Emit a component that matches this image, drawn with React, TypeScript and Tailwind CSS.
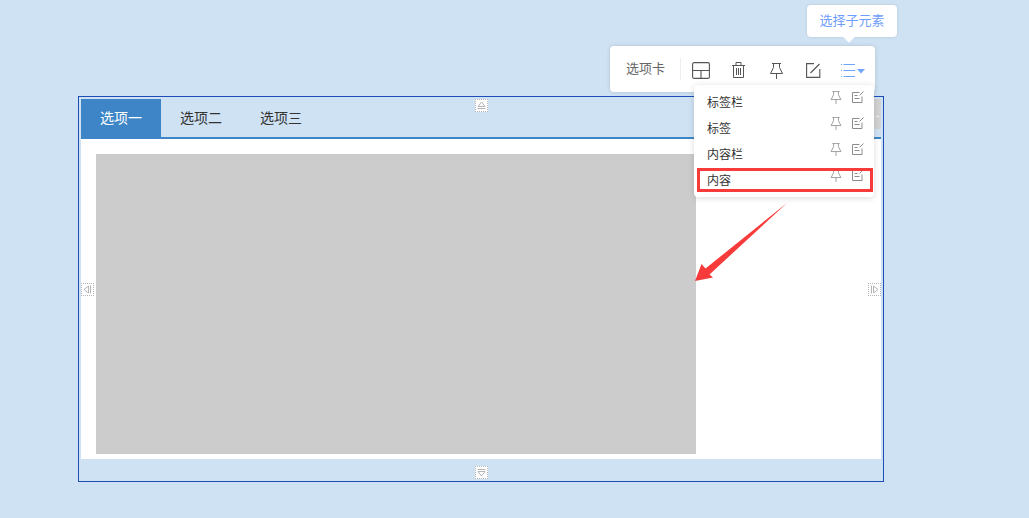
import React from 'react';

const font = { fontFamily: '"Liberation Sans", "Noto Sans CJK SC", sans-serif' };

const PinIcon = ({ className = '' }: { className?: string }) => (
    <svg viewBox="0 0 13 16" className={className} fill="none" stroke="currentColor" strokeWidth="1">
        <path d="M2 .5h9M3.5 .5v4L.5 10.5h12L9.5 4.5v-4M6.5 10.5v5.5" />
    </svg>
);

const EditIcon = ({ className = '' }: { className?: string }) => (
    <svg viewBox="0 0 12 12" className={className} fill="none" stroke="currentColor" strokeWidth="1">
        <path d="M7.5 1.5H.5v10h9.5V5.5M2.5 4.5h3M2.5 7.5h5M7.5 4.5l4-4" />
    </svg>
);

const menuItems = ['标签栏', '标签', '内容栏', '内容'];

const Handle = ({ className, dir }: { className: string; dir: 'up' | 'down' | 'left' | 'right' }) => {
    const paths = {
        up: 'M2.5 9.5h8M3 7.5 6.5 3 10 7.5z',
        down: 'M2.5 3.5h8M3 5.5 6.5 10 10 5.5z',
        left: 'M9.5 2.5v8M7.5 3 3 6.5 7.5 10z',
        right: 'M3.5 2.5v8M5.5 3 10 6.5 5.5 10z',
    };
    return (
        <div className={`absolute w-[13px] h-[13px] bg-white border border-dotted border-[#b5b5b5] ${className}`}>
            <svg viewBox="0 0 13 13" className="absolute -left-px -top-px w-[13px] h-[13px]" fill="none" stroke="#b5b5b5">
                <path d={paths[dir]} />
            </svg>
        </div>
    );
};

const App: React.FC = () => {
    return (
        <div className="relative w-[1029px] h-[518px] overflow-hidden bg-[#cfe2f3] pt-[96px] pl-[78px]" style={font}>
            {/* selected element frame */}
            <div className="relative w-[806px] h-[386px] border border-[#1e4db7] pt-[2px] pl-[2px] pr-[2px]">
                <div className="flex items-stretch h-[40px] border-b-2 border-[#3d85c6] text-[14px] text-[#333]">
                    <div className="w-[80px] flex items-center justify-center bg-[#3d85c6] text-white">选项一</div>
                    <div className="w-[80px] flex items-center justify-center">选项二</div>
                    <div className="w-[80px] flex items-center justify-center">选项三</div>
                </div>
                <div className="h-[320px] bg-white pt-[15px] pl-[15px]">
                    <div className="w-[600px] h-[300px] bg-[#cccccc]" />
                </div>
                <Handle className="left-[396px] top-[2px]" dir="up" />
                <Handle className="left-[396px] top-[369px]" dir="down" />
                <Handle className="left-[2px] top-[186px]" dir="left" />
                <Handle className="left-[789px] top-[186px]" dir="right" />
                {/* tab scroll button, mostly under the menu */}
                <div className="absolute right-[2px] top-[2px] w-[22px] h-[30px] bg-[#d2d2d2] flex items-center justify-end text-white text-[10px]">→</div>
            </div>

            {/* tooltip */}
            <div className="absolute left-[807px] top-[5px] w-[90px] h-[32px] rounded-[4px] bg-white flex items-center justify-center text-[13px] text-[#6f9dff] shadow-[0_0_3px_rgba(0,0,0,0.12)]">
                选择子元素
                <div className="absolute left-[38px] top-[28px] w-[8px] h-[8px] rotate-45 bg-white" />
            </div>

            {/* toolbar */}
            <div className="absolute left-[610px] top-[46px] w-[265px] h-[46px] rounded-[4px] bg-white flex items-center text-[#555] shadow-[0_0_4px_rgba(0,0,0,0.15)]">
                <span className="ml-[16px] w-[40px] text-[13px] text-[#666] whitespace-nowrap">选项卡</span>
                <div className="ml-[14px] w-px h-[22px] bg-[#eeeeee]" />
                <svg viewBox="0 0 18 17" className="ml-[11px] mt-[2px] w-[18px] h-[17px]" fill="none" stroke="currentColor" strokeWidth="1.1">
                    <rect x="0.6" y="0.6" width="16.8" height="15.8" rx="1.5" />
                    <path d="M0.6 8.5h16.8M9 8.5v7.9" />
                </svg>
                <svg viewBox="0 0 13 16" className="ml-[22px] mt-[2px] w-[13px] h-[16px]" fill="none" stroke="currentColor" strokeWidth="1">
                    <path d="M0 3.5h13M4 3.5V.5h5v3M1.5 3.5v12h10v-12M4.5 6v7M6.5 6v7M8.5 6v7" />
                </svg>
                <PinIcon className="ml-[25px] mt-[3px] w-[13px] h-[16px]" />
                <svg viewBox="0 0 15 15" className="ml-[23px] mt-[3px] w-[15px] h-[15px]" fill="none" stroke="currentColor" strokeWidth="1.1">
                    <path d="M8 .6H.6v13.8h13.2V6M4.5 10 13.5 1" />
                </svg>
                <svg viewBox="0 0 24 15" className="ml-[20px] mt-[3px] w-[24px] h-[15px]" fill="none" stroke="#6ea6ff" strokeWidth="1">
                    <path d="M0 1.5h1M2.5 1.5H14M0 7.5h1M2.5 7.5H14M0 13.5h1M2.5 13.5H14" />
                    <path d="M16 6h8l-4 4.5z" fill="#6ea6ff" stroke="none" />
                </svg>
            </div>

            {/* child element menu */}
            <div className="absolute left-[694px] top-[85px] w-[180px] h-[112px] rounded-[4px] bg-white pt-[4px] text-[12px] text-[#333] shadow-[0_1px_6px_rgba(0,0,0,0.15)]">
                {menuItems.map((item) => (
                    <div key={item} className="h-[26px] pl-[13px] pr-[10px] flex items-center">
                        <span className="flex-1 mt-[1px]">{item}</span>
                        <div className="flex items-start gap-[10px] self-start pt-[2px] text-[#8c8c8c]">
                            <PinIcon className="w-[12px] h-[13px]" />
                            <EditIcon className="w-[12px] h-[12px]" />
                        </div>
                    </div>
                ))}
                <div className="absolute left-[3px] top-[83px] w-[176px] h-[24px] border-[3px] border-[#f73a3a]" />
            </div>

            {/* annotation arrow */}
            <svg viewBox="0 0 1029 518" className="absolute left-0 top-0 w-[1029px] h-[518px] pointer-events-none">
                <path d="M787 203 709.5 274.5 713 277.5 695 281 701.5 264 705.5 268.5z" fill="#f73a3a" />
            </svg>
        </div>
    );
};

export default App;
